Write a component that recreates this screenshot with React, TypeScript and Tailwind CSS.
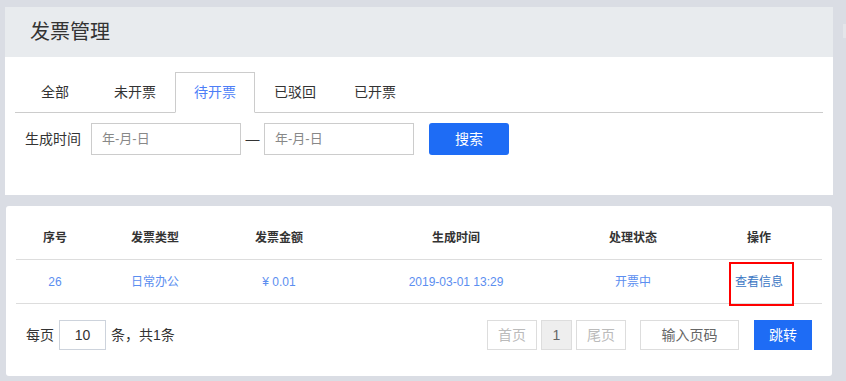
import React from "react";

const TABS = ["全部", "未开票", "待开票", "已驳回", "已开票"];

const COLS = [
  { label: "序号", w: "w-[78px]" },
  { label: "发票类型", w: "w-[122px]" },
  { label: "发票金额", w: "w-[126px]" },
  { label: "生成时间", w: "w-[228px]" },
  { label: "处理状态", w: "w-[126px]" },
  { label: "操作", w: "w-[126px]" },
];

const ROW = ["26", "日常办公", "¥ 0.01", "2019-03-01 13:29", "开票中"];

export default function App() {
  return (
    <div
      className="relative h-[381px] w-[846px] overflow-hidden bg-[#dadde4] text-[#333]"
      style={{ fontFamily: '"Liberation Sans", "Noto Sans CJK SC", sans-serif' }}
    >
      <div className="flex">
        <div className="w-[833px] pl-[5px] pt-[7px]">
          {/* top card */}
          <section className="h-[188px] bg-white">
            <div className="flex h-[50px] items-center bg-[#e8ebee] pl-[25px] text-[20px] text-[#333]">
              发票管理
            </div>
            <div className="px-[10px] pt-[15px]">
              <div className="flex h-[41px] border-b border-[#cccccc]">
                {TABS.map((t, i) => (
                  <div
                    key={t}
                    className={
                      i === 2
                        ? "-mb-px flex w-[80px] items-center justify-center border border-b-white border-[#cccccc] bg-white text-[14px] text-[#4d7ef7]"
                        : "flex w-[80px] items-center justify-center text-[14px] text-[#333]"
                    }
                  >
                    {t}
                  </div>
                ))}
              </div>
              <div className="mt-[10px] flex items-center pl-[10px]">
                <span className="mr-[10px] text-[14px] text-[#333]">生成时间</span>
                <div className="flex h-[32px] w-[150px] items-center border border-[#cccccc] px-[10px] text-[13px] text-[#888]">
                  年-月-日
                </div>
                <span className="mx-[3px] w-[17px] text-center text-[14px] text-[#333]">—</span>
                <div className="flex h-[32px] w-[150px] items-center border border-[#cccccc] px-[10px] text-[13px] text-[#888]">
                  年-月-日
                </div>
                <button className="ml-[15px] flex h-[32px] w-[80px] items-center justify-center rounded-[3px] bg-[#1e6cf5] text-[14px] text-white">
                  搜索
                </button>
              </div>
            </div>
          </section>

          {/* table card */}
          <section className="ml-px mt-[11px] h-[170px] w-[826px] rounded-[3px] bg-white px-[10px] pt-[10px]">
            <div className="flex h-[44px] border-b border-[#dddddd]">
              {COLS.map((c) => (
                <div
                  key={c.label}
                  className={`${c.w} flex items-center justify-center text-[12px] font-bold text-[#333]`}
                >
                  {c.label}
                </div>
              ))}
            </div>
            <div className="flex h-[44px] border-b border-[#dddddd]">
              {ROW.map((v, i) => (
                <div
                  key={i}
                  className={`${COLS[i].w} flex items-center justify-center text-[12px] text-[#5b8ef0]`}
                >
                  {v}
                </div>
              ))}
              <div className="relative w-[126px]">
                {/* red annotation box */}
                <div className="absolute left-[33px] top-[2px] flex h-[44px] w-[65px] items-center border-2 border-[#ff0000] pb-[4px] pl-[4px] text-[12px] text-[#3a76c4]">
                  查看信息
                </div>
              </div>
            </div>
            <div className="mt-[16px] flex items-center justify-between px-[10px]">
              <div className="flex items-center text-[14px] text-[#333]">
                <span>每页</span>
                <div className="mx-[5px] flex h-[30px] w-[47px] items-center justify-center border border-[#cdd3dc] text-[14px]">
                  10
                </div>
                <span>条，共1条</span>
              </div>
              <div className="flex items-center text-[14px]">
                <div className="flex h-[30px] w-[50px] items-center justify-center border border-[#dddddd] text-[#bbbbbb]">
                  首页
                </div>
                <div className="ml-[4px] flex h-[30px] w-[31px] items-center justify-center border border-[#dddddd] bg-[#eeeeee] text-[#666]">
                  1
                </div>
                <div className="ml-[4px] flex h-[30px] w-[50px] items-center justify-center border border-[#dddddd] text-[#bbbbbb]">
                  尾页
                </div>
                <div className="ml-[14px] flex h-[30px] w-[99px] items-center justify-center border border-[#dddddd] text-[#666]">
                  输入页码
                </div>
                <div className="ml-[15px] flex h-[30px] w-[58px] items-center justify-center bg-[#1e6cf5] text-white">
                  跳转
                </div>
              </div>
            </div>
          </section>
        </div>
        <div className="ml-[10px] pt-[24px]">
          <div className="h-[14px] w-[3px] bg-[#e4e6ea]" />
        </div>
      </div>
    </div>
  );
}
